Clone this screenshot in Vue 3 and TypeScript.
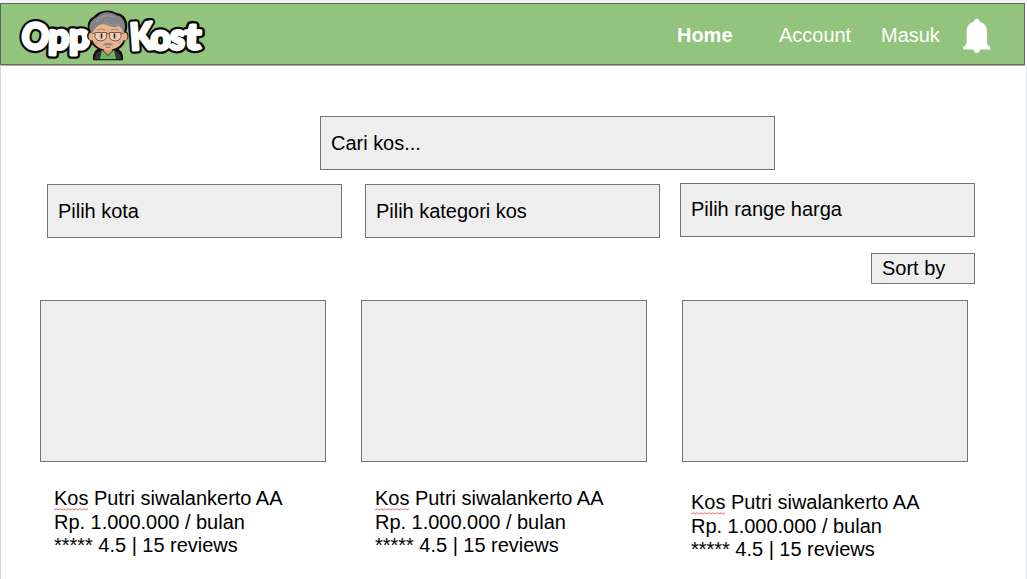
<script setup lang="ts">
interface Listing {
  id: number
  name: string
  rest: string
  price: string
  rating: string
}

const filters: string[] = ['Pilih kota', 'Pilih kategori kos', 'Pilih range harga']

const listings: Listing[] = [1, 2, 3].map((id) => ({
  id,
  name: 'Kos',
  rest: ' Putri siwalankerto AA',
  price: 'Rp. 1.000.000 / bulan',
  rating: '***** 4.5 | 15 reviews',
}))

interface Glyph {
  c: string
  x: number
  y: number
  w: number
  s: number
  r: number
}

const letters: Glyph[] = [
  { c: 'O', x: 21.5, y: 49, w: 27, s: 36, r: 12 },
  { c: 'p', x: 48.5, y: 49, w: 21, s: 36, r: 2 },
  { c: 'p', x: 69, y: 49, w: 21, s: 36, r: 0 },
  { c: 'K', x: 130, y: 49.5, w: 23, s: 37, r: -4 },
  { c: 'o', x: 150.5, y: 49.5, w: 20, s: 36, r: 0 },
  { c: 's', x: 170, y: 49.5, w: 15, s: 36, r: 3 },
  { c: 't', x: 185, y: 49, w: 16, s: 36, r: 2 },
]
</script>

<template>
  <div class="page">
    <header class="bar">
      <svg class="logo" viewBox="0 0 220 60" width="220" height="60" aria-label="OppKost">
        <g transform="translate(0 -4)">
          <g class="letters outline">
            <text v-for="(g, i) in letters" :key="'o' + i" :x="g.x" :y="g.y" :font-size="g.s" :textLength="g.w" lengthAdjust="spacingAndGlyphs" :transform="`rotate(${g.r} ${g.x + g.w / 2} 38)`">{{ g.c }}</text>
          </g>
          <g class="letters fill" aria-hidden="true">
            <text v-for="(g, i) in letters" :key="'f' + i" :x="g.x" :y="g.y" :font-size="g.s" :textLength="g.w" lengthAdjust="spacingAndGlyphs" :transform="`rotate(${g.r} ${g.x + g.w / 2} 38)`">{{ g.c }}</text>
          </g>
          <g stroke-linejoin="round">
            <path d="M94 59C94 53 96 50 101 49C94 46 92 43 91 40C87 38 88 33 91 32C87 26 89 20 95 17C99 12 108 10 116 14C124 15 128 22 125 32C128 34 128 39 124 40C123 45 119 48 115 49C119 50 122 53 122 59Z" fill="#151515" stroke="#111" stroke-width="2.5" />
            <path d="M95 59C95 54 98 51 103 50H112C118 51 121 54 121 59Z" fill="#30363a" />
            <path d="M102 50L108 56L114 50L116 59H100Z" fill="#70b559" />
            <path d="M104 47H112V51L108 55L104 51Z" fill="#d99a78" />
            <ellipse cx="91.5" cy="36.5" rx="3" ry="4" fill="#e5ac89" />
            <ellipse cx="124.5" cy="36.5" rx="3" ry="4" fill="#e5ac89" />
            <path d="M92 27C95 23 120 22 124 29V38C123 46 114 50 108 50C101 50 93 46 92 38Z" fill="#e9b48e" />
            <path d="M92 33C87 27 90 20 97 17C102 11 110 11 116 15C123 16 127 23 124 33C122 31 122 27 119 26C113 29 108 25 103 24C98 25 95 28 92 33Z" fill="#828488" />
            <path d="M96 22C101 15 109 14 115 18M104 22C109 25 115 26 120 24" fill="none" stroke="#96979b" stroke-width="1.4" />
            <path d="M97 30Q101 28 105 30M111 30Q115 28 119 30" fill="none" stroke="#a68675" stroke-width="1" />
            <path d="M95 32.5H106.5V37.5Q105 41 101 41Q96 41 95 37.5ZM109.5 32.5H121V37.5Q120 41 115 41Q111 41 109.5 37.5Z" fill="#f0ceb4" stroke="#775c4e" stroke-width="1" />
            <path d="M106.5 34Q108 33 109.5 34M92 33L95 34M121 34L124 33" fill="none" stroke="#775c4e" />
            <path d="M101.5 33.5V38.5M114.5 33.5V38.5" stroke="#342b2b" stroke-width="1.7" />
            <path d="M102.5 45Q105 42 108 43Q111 42 113.5 45Q108 46 102.5 45Z" fill="#8e8b8b" />
            <path d="M105.5 47Q108 48.3 110.5 47" fill="none" stroke="#b56959" />
            <circle cx="96.5" cy="42.5" r="1.7" fill="#e69d80" />
            <circle cx="119.5" cy="42.5" r="1.7" fill="#e69d80" />
          </g>
        </g>
      </svg>
      <nav class="nav">
        <a class="home">Home</a>
        <a class="account">Account</a>
        <a class="masuk">Masuk</a>
        <svg class="bell" viewBox="0 0 28 36" width="28" height="36">
          <path d="M11 3.5C11 1.8 12.2.8 13.8.8S16.6 1.8 16.6 3.5C21.5 5 24 8.5 24 14V24C24 26.5 25 28 27.2 28.6V31.6H17.3C16.8 33.8 15.6 35 13.8 35S10.8 33.8 10.3 31.6H.3V28.6C2.6 28 3.6 26.5 3.6 24V14C3.6 8.5 6.1 5 11 3.5Z" fill="#fff" />
        </svg>
      </nav>
    </header>
    <main class="content">
      <div class="box search">Cari kos...</div>
      <div class="filters">
        <div v-for="label in filters" :key="label" class="box filter">{{ label }}</div>
      </div>
      <div class="box sort">Sort by</div>
      <div class="cards">
        <article v-for="item in listings" :key="item.id" class="card">
          <div class="box photo"></div>
          <div class="info">
            <div><span class="name">{{ item.name }}<svg class="squiggle" width="35" height="3" viewBox="0 0 35 3"><path d="M0 2L2 .7L4 2L6 .7L8 2L10 .7L12 2L14 .7L16 2L18 .7L20 2L22 .7L24 2L26 .7L28 2L30 .7L32 2L34 .7" fill="none" stroke="#e05c5c" stroke-width=".9" /></svg></span>{{ item.rest }}</div>
            <div>{{ item.price }}</div>
            <div>{{ item.rating }}</div>
          </div>
        </article>
      </div>
    </main>
  </div>
</template>

<style>
body {
  margin: 0;
  overflow: hidden;
}
</style>

<style scoped>
.page {
  box-sizing: border-box;
  width: 1027px;
  height: 579px;
  padding-top: 3px;
  overflow: hidden;
  background: linear-gradient(#f1f3f6 0 3px, #fff 3px);
  color: #000;
  font: 20px/24px "Liberation Sans", Arial, sans-serif;
  letter-spacing: -0.02px;
  white-space: pre;
}
.bar {
  box-sizing: border-box;
  display: flex;
  justify-content: space-between;
  width: 1025px;
  height: 62px;
  border: 1px solid #5d6c57;
  background: #93c47d;
  box-shadow: 0 1px #a9b3a5;
}
.logo {
  display: block;
  margin-left: -1px;
}
.letters {
  font-family: Lato, sans-serif;
  font-weight: 900;
  letter-spacing: 0;
  stroke-linejoin: round;
}
.outline {
  fill: #080808;
  stroke: #080808;
  stroke-width: 7.6px;
}
.fill {
  fill: #fff;
  stroke: #fff;
  stroke-width: 3px;
}
.nav {
  display: flex;
  color: #fff;
  padding-top: 19px;
}
.home {
  width: 102px;
  font-weight: bold;
}
.account {
  width: 102px;
}
.masuk {
  width: 82px;
}
.bell {
  margin: -5px 33px 0 0;
}
.content {
  box-sizing: border-box;
  width: 1027px;
  height: 514px;
  padding-top: 51px;
  border-left: 1px solid #d6d6d6;
  border-right: 1px solid #e1e4e8;
}
.box {
  box-sizing: border-box;
  border: 1px solid #747474;
  background: #eee;
}
.search {
  width: 455px;
  height: 54px;
  margin-left: 319px;
  padding: 14px 10px;
}
.filters {
  display: grid;
  grid-template-columns: 295px 295px 295px;
  column-gap: 23px;
  margin: 14px 0 0 46px;
}
.filter {
  height: 54px;
  padding: 14px 10px;
}
.filter:last-child {
  margin: -1px 3px 0 -3px;
  padding-top: 13px;
  width: 295px;
}
.sort {
  width: 104px;
  height: 31px;
  margin: 15px 0 0 870px;
  padding: 2px 10px;
}
.cards {
  display: flex;
  gap: 35px;
  margin: 16px 0 0 39px;
}
.card {
  width: 286px;
}
.photo {
  height: 162px;
}
.info {
  padding: 25px 0 0 14px;
  line-height: 23.7px;
}
.card:last-child .info {
  padding: 29px 0 0 9px;
}
.name {
  position: relative;
}
.squiggle {
  position: absolute;
  left: 0;
  top: 21px;
}
</style>
